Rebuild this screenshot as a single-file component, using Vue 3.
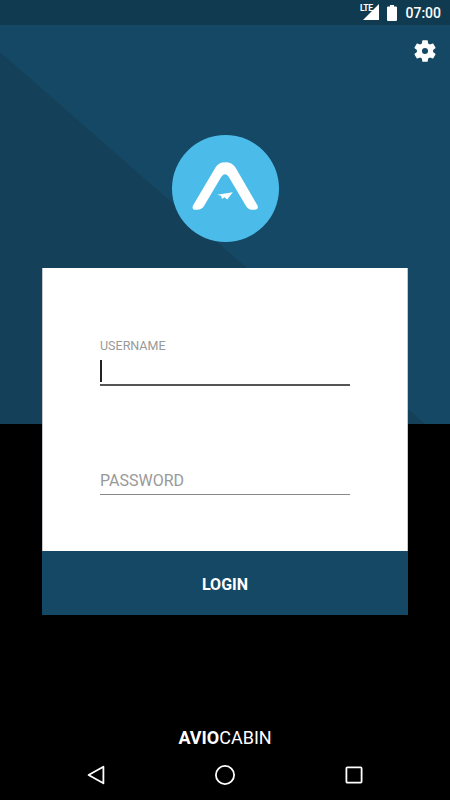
<template>
  <div class="screen">
    <div class="backdrop"></div>
    <header class="status">
      <svg class="lte" width="22" height="22" viewBox="0 0 22 22">
        <path d="M19 4V20H3z" fill="#fff" />
      </svg>
      <span class="lte-text">LTE</span>
      <svg class="battery" width="10" height="16" viewBox="0 0 10 16">
        <path d="M3 0h4v1.500h2a1 1 0 0 1 1 1V15a1 1 0 0 1-1 1H1a1 1 0 0 1-1-1V2.500a1 1 0 0 1 1-1h2z" fill="#fff" />
      </svg>
      <span class="clock">07:00</span>
    </header>
    <div class="toolbar">
      <svg class="gear" width="26" height="26" viewBox="0 0 24 24">
        <path fill="#fff" fill-rule="evenodd" d="M19.430 12.980c.04-.32.070-.64.070-.98s-.03-.66-.07-.98l2.110-1.650c.19-.15.240-.42.120-.64l-2-3.460c-.12-.22-.39-.3-.61-.22l-2.490 1c-.52-.4-1.080-.73-1.690-.98l-.38-2.650A.488.488 0 0 0 14 2h-4c-.25 0-.46.180-.49.420l-.38 2.650c-.61.250-1.170.59-1.690.98l-2.490-1c-.23-.09-.49 0-.61.220l-2 3.460c-.13.220-.07.490.12.640l2.110 1.650c-.04.320-.07.650-.07.980s.03.660.07.980l-2.110 1.650c-.19.150-.24.420-.12.640l2 3.460c.12.220.39.300.61.220l2.490-1c.52.400 1.080.730 1.690.980l.38 2.650c.03.240.24.420.49.420h4c.25 0 .46-.18.49-.42l.38-2.650c.61-.25 1.170-.59 1.690-.98l2.490 1c.23.090.49 0 .61-.22l2-3.460c.12-.22.070-.49-.12-.64l-2.110-1.650zM12 14.800a2.800 2.800 0 1 1 0-5.600 2.800 2.800 0 0 1 0 5.600z" />
      </svg>
    </div>
    <div class="logo">
      <svg width="107" height="107" viewBox="171.500 134.500 107 107">
        <path fill="#fff" d="M192.500 205 L215 167 Q218 161.700 225 161.700 Q231.500 161.700 235 167 L257 205 Q258.500 209 254 209.300 L251 209.300 Q248 209.300 245.500 205.500 L228 176 Q224.500 171.500 221 176 L203.500 205.500 Q201 209.300 197 209.300 L195 209.300 Q191 209 192.500 205z" />
        <path fill="#fff" d="M216.700 194.300 L232.300 191.700 L226.700 199 L224 196.800 L221.500 198.500 L220.500 195.300z" />
      </svg>
    </div>
    <section class="card">
      <div class="form">
        <label class="field first">
          <span class="float-label">USERNAME</span>
          <span class="input focused"><i class="caret"></i></span>
        </label>
        <label class="field second">
          <span class="placeholder">PASSWORD</span>
          <span class="input"></span>
        </label>
      </div>
      <button class="login" type="button">LOGIN</button>
    </section>
    <div class="brand"><b>AVIO</b>CABIN</div>
    <nav class="navbar">
      <svg width="20" height="20" viewBox="0 0 20 20">
        <path class="nav-stroke" d="M17.400 1.700 2.600 10 17.400 18.300z" />
      </svg>
      <svg width="20" height="20" viewBox="0 0 20 20">
        <circle class="nav-stroke" cx="10" cy="10" r="9.100" />
      </svg>
      <svg width="18" height="18" viewBox="0 0 18 18">
        <rect class="nav-stroke" x="1.400" y="1.400" width="15.200" height="15.200" rx="1" />
      </svg>
    </nav>
  </div>
</template>

<script setup>
</script>

<style scoped>
.screen {
  position: relative;
  width: 450px;
  height: 800px;
  overflow: hidden;
  background: #000;
  font-family: Roboto, "Liberation Sans", sans-serif;
  display: flex;
  flex-direction: column;
  align-items: center;
}
.backdrop {
  position: absolute;
  left: 0;
  top: 0;
  width: 450px;
  height: 424px;
  background: #154864;
}
.backdrop::before {
  content: "";
  position: absolute;
  inset: 0;
  background: #144159;
  clip-path: polygon(0 52px, 425px 424px, 0 424px);
}
.status {
  position: relative;
  align-self: stretch;
  height: 25px;
  flex: none;
  background: #103a50;
  display: flex;
  align-items: center;
  justify-content: flex-end;
  padding-right: 9px;
  color: #fff;
}
.lte { position: absolute; left: 360px; top: 0; }
.lte-text {
  position: absolute;
  left: 360px;
  top: 4px;
  font-size: 8.500px;
  line-height: 9px;
  font-weight: 700;
  letter-spacing: -0.3px;
}
.battery { margin-right: 8px; }
.clock { font-size: 14px; font-weight: 500; padding-top: 1px; }
.toolbar {
  position: relative;
  align-self: stretch;
  height: 52px;
  flex: none;
  display: flex;
  justify-content: flex-end;
  align-items: center;
  padding-right: 12px;
}
.logo {
  position: relative;
  margin-top: 57.500px;
  width: 107px;
  height: 107px;
  border-radius: 50%;
  background: #4bbce9;
  flex: none;
}
.logo svg { display: block; }
.card {
  position: relative;
  margin-top: 26.500px;
  width: 366px;
  flex: none;
  display: flex;
  flex-direction: column;
}
.form {
  height: 283px;
  background: #fff;
  box-shadow: inset 1px 0 #c4c8cc, inset -1px 0 #c4c8cc;
  padding: 0 58px;
  display: flex;
  flex-direction: column;
}
.field { display: block; position: relative; }
.first { margin-top: 71px; }
.second { margin-top: 85px; }
.float-label {
  display: block;
  font-size: 12.500px;
  line-height: 14px;
  color: #999;
}
.placeholder {
  display: block;
  font-size: 16px;
  line-height: 19px;
  color: #999;
}
.input {
  display: block;
  border-bottom: 1px solid #888;
  height: 4px;
}
.focused {
  height: 24px;
  border-bottom: 2px solid #555;
  padding-top: 7px;
}
.caret {
  display: block;
  width: 2px;
  height: 22px;
  background: #222;
}
.login {
  display: block;
  width: 100%;
  height: 64px;
  border: 0;
  padding: 2px 0 0;
  background: #154864;
  color: #fff;
  font: 700 16px Roboto, "Liberation Sans", sans-serif;
}
.brand {
  margin-top: auto;
  margin-bottom: 2px;
  font-size: 18px;
  line-height: 22px;
  color: #fff;
}
.brand b { font-weight: 700; }
.navbar {
  align-self: stretch;
  height: 48px;
  padding-bottom: 1px;
  box-sizing: border-box;
  margin-bottom: 1px;
  flex: none;
  display: grid;
  grid-template-columns: repeat(3, 129.400px);
  justify-content: center;
  align-items: center;
  justify-items: center;
}
.nav-stroke {
  fill: none;
  stroke: #fff;
  stroke-width: 1.800;
  stroke-linejoin: round;
}
</style>
